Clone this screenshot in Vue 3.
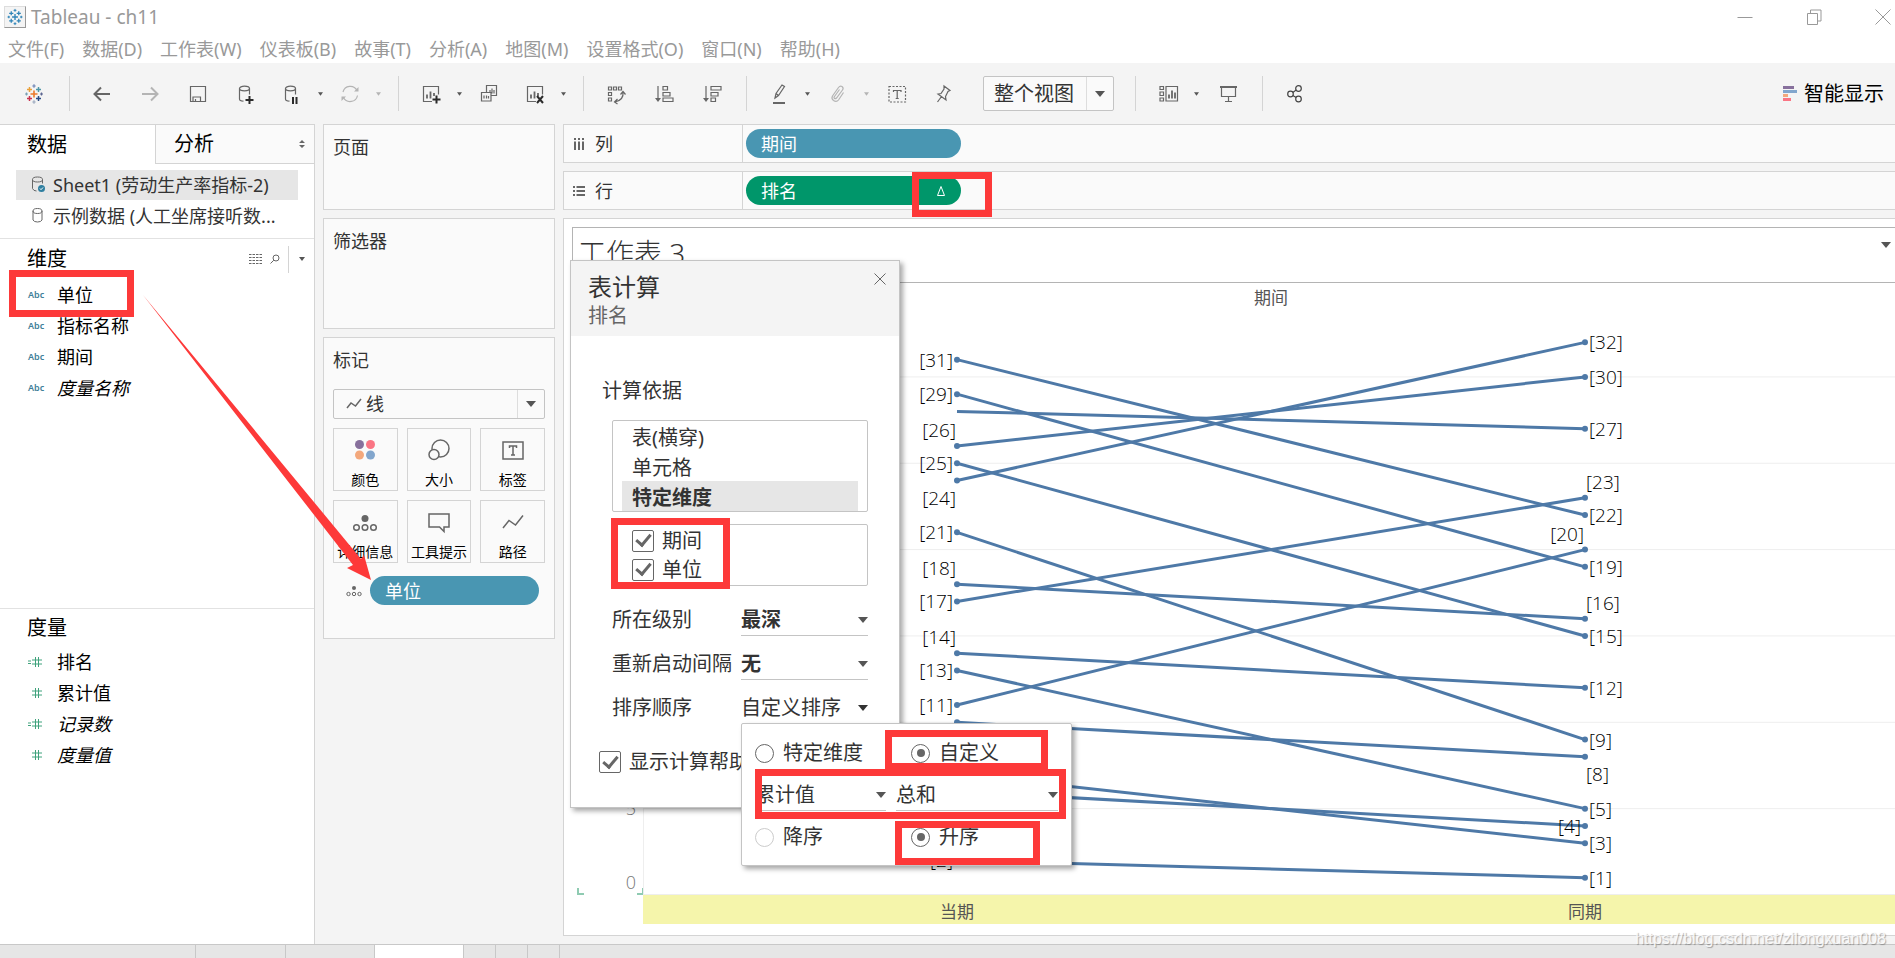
<script setup>
import { ref } from 'vue'

const menus = ['文件(F)', '数据(D)', '工作表(W)', '仪表板(B)', '故事(T)', '分析(A)', '地图(M)', '设置格式(O)', '窗口(N)', '帮助(H)']

const cross = (x, y, r, c, w = 1.5) =>
  `<path d="M${x - r} ${y}h${2 * r}M${x} ${y - r}v${2 * r}" stroke="${c}" stroke-width="${w}"/>`
const logo = (c) =>
  cross(12, 12, 3.5, c[0], 1.6) +
  cross(7.5, 7.5, 2.5, c[1]) + cross(16.5, 7.5, 2.5, c[2]) +
  cross(7.5, 16.5, 2.5, c[3]) + cross(16.5, 16.5, 2.5, c[4]) +
  cross(12, 4, 1.7, c[5], 1.2) + cross(12, 20, 1.7, c[6], 1.2) +
  cross(4.5, 12, 1.5, c[7], 1.2) + cross(19.5, 12, 1.5, c[8], 1.2)

const cyl = '<ellipse cx="10.5" cy="6.5" rx="5" ry="2.3"/><path d="M5.5 6.5v10.5q0 2 4 2.2M15.5 6.5v6"/>'
const sheet = '<path d="M13 19.5h-8.5v-15h15v8"/><path d="M8 16.5v-4M11.5 16.5v-7M15 14v-3" stroke-width="1.8"/>'

const icons = {
  logo: logo(['#eb7a2c', '#e9a13b', '#4f97a8', '#c8334f', '#2a4c86', '#6b83b5', '#9ba9bf', '#7aa0b5', '#5b6591']),
  appLogo: logo(Array(9).fill('#2f84b8')),
  back: '<path d="M20 12H5M11 5.500l-6.500 6.500 6.500 6.500" stroke-width="2"/>',
  forward: '<path d="M4 12h15M13 5.500l6.500 6.500-6.500 6.500" stroke="#b4b4b4" stroke-width="2"/>',
  save: '<path d="M4.500 4.500h15v15h-15z"/><path d="M7 19.500v-4.500h7.500v4.500M9.500 17v2.500" />',
  addData: cyl + '<path d="M11.500 18h8M15.500 14v8" stroke="#2b2b2b" stroke-width="2"/>',
  pause: cyl + '<path d="M13 15v7M16.500 15v7" stroke="#2b2b2b" stroke-width="2"/>',
  refresh: '<g stroke="#b4b4b4"><path d="M5 10a7.500 7.500 0 0 1 14-1.500M19.500 13.500a7.500 7.500 0 0 1-14 2"/><path d="M20.500 5v4.500h-4.500zM3.500 19v-4.500h4.500z" fill="#b4b4b4" stroke="none"/></g>',
  newSheet: sheet + '<path d="M13.500 17.500h8M17.500 13.500v8" stroke="#2b2b2b" stroke-width="2"/>',
  duplicate: '<path d="M9.500 10v-6.500h10v10h-5.500M4.500 10.500h9.500v8.500h-9.500zM13 8v3M15 6.500v5M17 8v3.500M7 13.500v3M9.500 13.500v3M11.500 14v2.500"/>',
  clear: sheet + '<path d="M14 14l6 7M20 14l-6 7" stroke="#2b2b2b" stroke-width="2"/>',
  swap: '<path d="M4.500 5h3v3h-3zM9.500 5h3v3h-3zM14.500 5h3v3h-3zM4.500 10.500h3v3h-3zM4.500 16h3v3h-3z"/><path d="M19 10q1 8-8 10M16.500 12.500l2.500-3 2.500 3M13.500 17l-3 3 3 2"/>',
  sortAsc: '<path d="M6 4v14M11 4.500h4.500v3.500h-4.500zM11 10.500h7v3.500h-7zM11 16h10v3.500h-10z"/><path d="M3 16h6l-3 4z" fill="#666" stroke="none"/>',
  sortDesc: '<path d="M6 4v14M11 4.500h10v3.500h-10zM11 10.500h7v3.500h-7zM11 16h4.500v3.500h-4.500z"/><path d="M3 16h6l-3 4z" fill="#666" stroke="none"/>',
  pen: '<path d="M8 16l1-4.500 6-8.500 2.500 1.500-6 9zM9 11.500l2.500 2"/><path d="M6 21h12" stroke-width="2"/>',
  clip: '<path d="M17.500 10.500l-5 7.500q-2 2.500-5 .5-2.500-2-1-4.500l6-8.500q1.500-2 3.500-1 2 1.500.5 3.500l-6 8q-1 1-2 .5-1-.800 0-2l5-7" stroke="#b4b4b4"/>',
  text: '<path d="M4 4.500h16.500v15.500h-16.500z" stroke-dasharray="2 1.500"/><path d="M8.500 10v-1.500h7.500v1.500M12.200 8.500v8M10.700 16.500h3"/>',
  pin: '<path d="M13 4l6 4.500-2 1-2.500 5 .5 3.500-8-6 3-.5 3-4.500zM10.500 14.500l-4 5.500"/>',
  cards: '<path d="M4 4.500h3.500v3h-3.500zM4 10h3.500v3.500h-3.500zM4 16h3.500v3h-3.500zM10 4.500h11.500v14.500h-11.500z"/><path d="M13 16.500v-4M16 16.500v-8M19 16.500v-6" stroke-width="1.800"/>',
  present: '<path d="M4 5h17" stroke-width="2"/><path d="M5.500 5v9.500h14v-9.500M12.500 14.500v5M9 19.500h7"/>',
  share: '<g stroke="#444"><circle cx="7.500" cy="12" r="2.800"/><circle cx="15.500" cy="6.500" r="2.800"/><circle cx="15.500" cy="17" r="2.800"/><path d="M9.800 10.400l3.400-2.400M9.800 13.500l3.400 2"/></g>',
}

const groups = [
  { cls: 'first', parts: [{ gap: 24, items: [['logo', '开始页面']] }] },
  {
    parts: [
      { gap: 24, items: [['back', '撤消'], ['forward', '重做'], ['save', '保存'], ['addData', '新建数据源']] },
      { gap: 12, items: [['pause', '暂停自动更新', 'dark'], ['refresh', '运行更新', 'light']] },
    ],
  },
  {
    parts: [
      { gap: 12, items: [['newSheet', '新建工作表', 'dark'], ['duplicate', '复制']] },
      { gap: 24, items: [['clear', '清除工作表', 'dark']] },
    ],
  },
  { cls: 'wide', parts: [{ gap: 24, items: [['swap', '交换行和列'], ['sortAsc', '升序排序'], ['sortDesc', '降序排序']] }] },
  {
    cls: 'fit',
    parts: [
      { gap: 13, items: [['pen', '突出显示', 'dark'], ['clip', '组成员', 'light'], ['text', '显示标记标签']] },
      { gap: 24, items: [['pin', '固定轴']] },
    ],
    select: true,
  },
  { cls: 'wide', parts: [{ gap: 14, items: [['cards', '显示/隐藏卡', 'dark'], ['present', '演示模式']] }] },
  { cls: 'last', parts: [{ gap: 24, items: [['share', '共享']] }] },
]

const dimensions = [{ n: '单位' }, { n: '指标名称' }, { n: '期间' }, { n: '度量名称', i: true }]
const measures = [{ n: '排名', c: true }, { n: '累计值' }, { n: '记录数', c: true, i: true }, { n: '度量值', i: true }]

const marks = [
  { n: '颜色', svg: '<g stroke="none"><circle cx="9.500" cy="7.500" r="4.500" fill="#87709c"/><circle cx="20.500" cy="7.500" r="4.500" fill="#fa7584"/><circle cx="9.500" cy="18" r="4.500" fill="#f3a87c"/><circle cx="20.500" cy="18" r="4.500" fill="#82a6cd"/></g>' },
  { n: '大小', svg: '<circle cx="16.500" cy="11.500" r="8.500"/><circle cx="10" cy="17.500" r="5" fill="#fafafa"/>' },
  { n: '标签', svg: '<path d="M5 5h20v17h-20z"/><path d="M11.500 11v-2h7v2M15 9v9M13 18h4" stroke-width="1.500"/>' },
  { n: '详细信息', svg: '<circle cx="15" cy="9.500" r="3.500" fill="#666" stroke="none"/><circle cx="6.500" cy="18.500" r="2.800"/><circle cx="15" cy="18.500" r="2.800"/><circle cx="23.500" cy="18.500" r="2.800"/>' },
  { n: '工具提示', svg: '<path d="M5 5h20v13h-5v4.500l-4.500-4.500h-10.500z"/>' },
  { n: '路径', svg: '<path d="M5 19l6-7.500 6.500 4.500 7.500-9.500"/>' },
]

const unit = 17.27
const plotH = 582
const yOf = (r) => plotH - r * unit
const grid = [5, 10, 15, 20, 25, 30]
const series = [[31, 22], [29, 19], [28, 27], [26, 30], [25, 15], [24, 32], [21, 9], [18, 16], [17, 23], [14, 12], [13, 5], [11, 20], [10, 8], [7, 3], [6, 4], [2, 1]]
const place = {
  side: { dx: 4, dy: 7 },
  above: { dx: 1, dy: -9 },
  below: { dx: 1, dy: 24 },
}
const leftLabels = [[31, 'side'], [29, 'side'], [26, 'above'], [25, 'side'], [24, 'below'], [21, 'side'], [18, 'above'], [17, 'side'], [14, 'above'], [13, 'side'], [11, 'side'], [2, 'side']]
const rightLabels = [[32, 'side'], [30, 'side'], [27, 'side'], [23, 'above'], [22, 'side'], [19, 'side'], [16, 'above'], [15, 'side'], [12, 'side'], [9, 'side'], [8, 'below'], [5, 'side'], [3, 'side'], [1, 'side']]
const innerLabels = [[20, 'above'], [4, 'side']]

const scopes = ['表(横穿)', '单元格', '特定维度']
const scope = ref('特定维度')
const usePeriod = ref(true)
const useUnit = ref(true)
const assist = ref(true)
const sortMode = ref('custom')
const direction = ref('asc')

const boxes = ['hl-field', 'hl-delta', 'hl-checks', 'hl-custom', 'hl-field-agg', 'hl-asc']
</script>

<template>
  <div class="app">
    <header class="titlebar">
      <svg class="appicon" viewBox="0 0 24 24" v-html="icons.appLogo"></svg>
      <h1>Tableau - ch11</h1>
      <div class="winbtns">
        <button aria-label="最小化"><svg viewBox="0 0 16 16"><path d="M0.500 8.500h15" /></svg></button>
        <button aria-label="还原"><svg viewBox="0 0 16 16"><path d="M1.500 4.500h10v11h-10zM4.500 4.500v-3.500h10.500v11h-3.500" /></svg></button>
        <button aria-label="关闭"><svg viewBox="0 0 16 16"><path d="M0.500 0.500l15 15M15.500 0.500l-15 15" /></svg></button>
      </div>
    </header>

    <nav class="menubar">
      <button v-for="m in menus" :key="m">{{ m }}</button>
    </nav>

    <div class="toolbar">
      <div v-for="(g, gi) in groups" :key="gi" class="group" :class="g.cls">
        <div v-for="(p, pi) in g.parts" :key="pi" class="part" :class="'gap' + p.gap">
          <div v-for="it in p.items" :key="it[0]" class="tool">
            <button class="iconbtn" :aria-label="it[1]"><svg viewBox="0 0 24 24" v-html="icons[it[0]]"></svg></button>
            <button v-if="it[2]" class="drop" :class="it[2]" :aria-label="it[1] + '选项'">
              <svg viewBox="0 0 6 4"><path d="M0 0h6l-3 4z" /></svg>
            </button>
          </div>
        </div>
        <div v-if="g.select" class="combo fit-combo">
          <select aria-label="适合"><option>整个视图</option></select>
          <svg class="tri" viewBox="0 0 10 6"><path d="M0 0h10l-5 6z" /></svg>
        </div>
      </div>
      <button class="showme">
        <svg viewBox="0 0 14 16"><path fill="#87709c" d="M0 0h11v3h-11z" /><path fill="#82a6cd" d="M0 4h14v3h-14z" /><path fill="#f3a87c" d="M0 8h5v3h-5z" /><path fill="#fa7584" d="M0 12h8v3h-8z" /></svg>
        智能显示
      </button>
    </div>

    <main class="work">
      <aside class="datapane">
        <div class="tabs">
          <button class="tab on">数据</button>
          <button class="tab">分析
            <svg viewBox="0 0 6 8"><path d="M0 3l3-3 3 3zM0 5h6l-3 3z" /></svg>
          </button>
        </div>
        <ul class="sources">
          <li class="on">
            <svg viewBox="0 0 16 18"><ellipse cx="6.500" cy="3.500" rx="5" ry="2.500" /><path d="M1.500 3.500v9q1 2.500 4 2.500M11.500 3.500v4" /><circle cx="10.500" cy="12.500" r="3.500" fill="#2f7fa0" stroke="none" /><path d="M9 12.500l1 1.200 2-2.200" stroke="#fff" /></svg>
            <span>Sheet1 (劳动生产率指标-2)</span>
          </li>
          <li>
            <svg viewBox="0 0 16 18"><ellipse cx="6.500" cy="4" rx="4.500" ry="2.500" /><path d="M2 4v9q1 2 4.500 2t4.500-2v-9" /></svg>
            <span>示例数据 (人工坐席接听数...</span>
          </li>
        </ul>
        <section class="dims">
          <div class="sechead">
            <h2>维度</h2>
            <button class="view" aria-label="查看数据"><svg viewBox="0 0 13 10"><path d="M0 0.500h13M0 3.500h13M0 6.500h13M0 9.500h13" stroke-dasharray="2.500 1" /></svg></button>
            <button class="find" aria-label="查找字段"><svg viewBox="0 0 10 10"><circle cx="6" cy="4" r="3" /><path d="M3.800 6.200l-3.300 3.300" /></svg></button>
            <button class="more" aria-label="维度菜单"><svg viewBox="0 0 6 4"><path d="M0 0h6l-3 4z" /></svg></button>
          </div>
          <ul class="fields">
            <li v-for="d in dimensions" :key="d.n"><span class="abc">Abc</span><span :class="{ it: d.i }">{{ d.n }}</span></li>
          </ul>
        </section>
        <section class="meas">
          <div class="sechead"><h2>度量</h2></div>
          <ul class="fields">
            <li v-for="m in measures" :key="m.n">
              <svg class="hash" viewBox="0 0 14 10"><path d="M4 3h10M4 7h10M7.500 0v10M10.500 0v10" /><path v-if="m.c" d="M0 4h3M0 6.500h3" /></svg>
              <span :class="{ it: m.i }">{{ m.n }}</span>
            </li>
          </ul>
        </section>
      </aside>

      <div class="cards">
        <section class="card pages"><h3>页面</h3></section>
        <section class="card filters"><h3>筛选器</h3></section>
        <section class="card marks">
          <h3>标记</h3>
          <div class="combo mark-combo">
            <svg class="lineicon" viewBox="0 0 16 12"><path d="M1 10l4-5 4.500 3 5.500-7" /></svg>
            <select aria-label="标记类型"><option>线</option></select>
            <svg class="tri" viewBox="0 0 10 6"><path d="M0 0h10l-5 6z" /></svg>
          </div>
          <div class="markgrid">
            <button v-for="m in marks" :key="m.n"><svg viewBox="0 0 30 26" v-html="m.svg"></svg>{{ m.n }}</button>
          </div>
          <div class="detail">
            <svg viewBox="0 0 16 12"><circle cx="8" cy="3" r="2" fill="#666" stroke="none" /><circle cx="2.500" cy="9" r="1.700" /><circle cx="8" cy="9" r="1.700" /><circle cx="13.500" cy="9" r="1.700" /></svg>
            <button class="pill blue">单位</button>
          </div>
        </section>
      </div>

      <div class="canvas">
        <div class="shelf">
          <div class="shelfname">
            <svg viewBox="0 0 12 12"><path d="M2 0v2M6 0v2M10 0v2M2 3.500v8.500M6 3.500v8.500M10 3.500v8.500" /></svg>列
          </div>
          <button class="pill blue">期间</button>
        </div>
        <div class="shelf">
          <div class="shelfname">
            <svg viewBox="0 0 12 12"><path d="M0 2h2M0 6h2M0 10h2M3.500 2h8.500M3.500 6h8.500M3.500 10h8.500" /></svg>行
          </div>
          <button class="pill green">排名
            <svg viewBox="0 0 10 12"><path d="M5 1.500l3.500 9h-7z" /></svg>
          </button>
        </div>
        <section class="viz">
          <div class="viztitle">
            <h2>工作表 3</h2>
            <button aria-label="工作表菜单"><svg viewBox="0 0 10 6"><path d="M0 0h10l-5 6z" /></svg></button>
          </div>
          <div class="vizbody">
            <svg class="axis" role="img" aria-label="排名轴">
              <text x="64" :y="yOf(5) + 6">5</text>
              <text x="64" :y="yOf(0) - 6">0</text>
              <path d="M6 575v6h6M65 581h6v-6" />
            </svg>
            <div class="plotcol">
              <div class="colhead">期间</div>
              <svg class="plot" role="img" aria-label="排名变化">
                <line v-for="g in grid" :key="g" class="grid" x1="0" x2="100%" :y1="yOf(g)" :y2="yOf(g)" />
                <line class="grid" x1="0.500" x2="0.500" y1="0" y2="582" />
                <line class="grid" x1="0" x2="100%" y1="581.500" y2="581.500" />
                <g v-for="s in series" :key="s[0]">
                  <line class="rank" x1="25%" x2="75%" :y1="yOf(s[0])" :y2="yOf(s[1])" />
                  <circle v-if="s[0] !== 28" cx="25%" :cy="yOf(s[0])" r="3" />
                  <circle cx="75%" :cy="yOf(s[1])" r="3" />
                </g>
                <text v-for="l in leftLabels" :key="'l' + l[0]" class="end" x="25%" :dx="-place[l[1]].dx" :y="yOf(l[0]) + place[l[1]].dy">[{{ l[0] }}]</text>
                <text v-for="l in rightLabels" :key="'r' + l[0]" x="75%" :dx="place[l[1]].dx" :y="yOf(l[0]) + place[l[1]].dy">[{{ l[0] }}]</text>
                <text v-for="l in innerLabels" :key="'i' + l[0]" class="end" x="75%" :dx="-place[l[1]].dx" :y="yOf(l[0]) + place[l[1]].dy">[{{ l[0] }}]</text>
              </svg>
              <div class="band"><span>当期</span><span>同期</span></div>
            </div>
          </div>
        </section>
      </div>
    </main>

    <footer class="sheetbar"><i></i><i></i><i></i><i class="on"></i><i></i><i></i><i></i></footer>

    <section class="dialog" role="dialog" aria-label="表计算">
      <div class="dhead">
        <div><h2>表计算</h2><p>排名</p></div>
        <button aria-label="关闭对话框"><svg viewBox="0 0 12 12"><path d="M0.500 0.500l11 11M11.500 0.500l-11 11" /></svg></button>
      </div>
      <div class="dbody">
        <h3>计算依据</h3>
        <div class="scopes">
          <button v-for="s in scopes" :key="s" :class="{ on: s === scope }" @click="scope = s">{{ s }}</button>
        </div>
        <div class="checks">
          <label><input v-model="usePeriod" type="checkbox" />期间</label>
          <label><input v-model="useUnit" type="checkbox" />单位</label>
        </div>
        <div class="opt"><label for="lvl">所在级别</label>
          <div class="under"><select id="lvl" class="b"><option>最深</option></select><svg viewBox="0 0 10 6"><path d="M0 0h10l-5 6z" /></svg></div></div>
        <div class="opt"><label for="rst">重新启动间隔</label>
          <div class="under"><select id="rst" class="b"><option>无</option></select><svg viewBox="0 0 10 6"><path d="M0 0h10l-5 6z" /></svg></div></div>
        <div class="opt"><label for="ord">排序顺序</label>
          <div class="under open"><select id="ord"><option>自定义排序</option></select><svg viewBox="0 0 10 6"><path d="M0 0h10l-5 6z" /></svg></div></div>
        <label class="assist"><input v-model="assist" type="checkbox" />显示计算帮助</label>
      </div>
    </section>

    <section class="popup">
      <div class="two">
        <label><input v-model="sortMode" type="radio" name="mode" value="dim" />特定维度</label>
        <label><input v-model="sortMode" type="radio" name="mode" value="custom" />自定义</label>
      </div>
      <div class="selrow">
        <div class="under"><select aria-label="字段"><option>累计值</option></select><svg viewBox="0 0 10 6"><path d="M0 0h10l-5 6z" /></svg></div>
        <div class="under"><select aria-label="聚合"><option>总和</option></select><svg viewBox="0 0 10 6"><path d="M0 0h10l-5 6z" /></svg></div>
      </div>
      <div class="two">
        <label class="faint"><input v-model="direction" type="radio" name="dir" value="desc" />降序</label>
        <label><input v-model="direction" type="radio" name="dir" value="asc" />升序</label>
      </div>
    </section>

    <div v-for="b in boxes" :key="b" class="hl" :class="b"></div>
    <svg class="arrow" viewBox="0 0 230 290"><path d="M0 1L218 265 221 261 228 286 204 274 210 271z" /></svg>
    <div class="watermark">https://blog.csdn.net/zilongxuan008</div>
  </div>
</template>

<style>
html, body { background: #f4f4f4; overflow-x: hidden; }
</style>

<style scoped>
.app {
  position: relative;
  display: flex;
  flex-direction: column;
  min-height: 100vh;
  overflow: hidden;
  font-family: "Noto Sans", "Noto Sans CJK SC", sans-serif;
  font-size: 18px;
  line-height: 30px;
  color: #333;
}
.app *, .app :deep(*) { box-sizing: border-box; }
h1, h2, h3, p, ul { margin: 0; padding: 0; font-weight: 400; }
ul { list-style: none; }
button, select {
  font: inherit;
  color: inherit;
  background: none;
  border: 0;
  padding: 0;
  margin: 0;
  appearance: none;
}
input { margin: 0; }
svg { display: block; fill: none; stroke: #666; flex: none; }

.titlebar { display: flex; align-items: center; height: 34px; background: #fff; color: #999; }
.appicon { width: 22px; height: 22px; margin-left: 4px; background: #f4f4f4; border: 1px solid #ddd; border-right-color: #999; border-bottom-color: #999; }
h1 { margin-left: 5px; font-size: 19px; }
.winbtns { margin-left: auto; margin-right: 4px; display: flex; gap: 53px; }
.winbtns svg { width: 16px; height: 16px; stroke: #999; }

.menubar { display: flex; gap: 18px; height: 29px; padding-left: 8px; background: #fff; color: #999; line-height: 30px; }

.toolbar { display: flex; align-items: center; height: 61px; background: #f4f4f4; }
.group { display: flex; align-items: center; gap: 22px; height: 35px; padding: 0 14px 0 20px; border-right: 1px solid #d4d4d4; }
.group.first { padding: 0 23px 0 22px; }
.group.wide { padding-right: 22px; }
.group.fit { padding-right: 21px; }
.group.last { border: 0; }
.part { display: flex; }
.gap24 { gap: 24px; }
.gap12 { gap: 12px; }
.gap13 { gap: 13px; }
.gap14 { gap: 14px; }
.tool { display: flex; align-items: center; gap: 10px; }
.iconbtn svg { width: 24px; height: 24px; stroke-width: 1.2; }
.drop { width: 12px; height: 24px; display: flex; align-items: center; justify-content: center; }
.drop svg { width: 5px; height: 4px; stroke: none; fill: #555; }
.drop.light svg { fill: #b4b4b4; }
.combo { display: flex; align-items: center; position: relative; border: 1px solid #c4c4c4; border-radius: 2px; background: #fafafa; }
.combo select { flex: 1; min-width: 0; height: 100%; }
.combo .tri { position: absolute; right: 8px; width: 10px; height: 6px; pointer-events: none; }
.tri, .under svg, .viztitle svg { stroke: none; fill: #555; }
.combo::after { content: ""; position: absolute; right: 26px; top: 0; bottom: 0; border-left: 1px solid #ddd; }
.fit-combo { width: 131px; height: 35px; margin-left: 6px; font-size: 20px; }
.fit-combo select { padding: 1px 0 0 10px; }
.showme { margin-left: auto; margin-right: 11px; display: flex; align-items: center; gap: 7px; font-size: 20px; color: #000; }
.showme svg { width: 14px; height: 16px; stroke: none; }

.work { flex: 1; display: flex; gap: 8px; }

.datapane { width: 315px; flex: none; background: #fff; border-top: 1px solid #d4d4d4; border-right: 1px solid #d4d4d4; color: #000; }
.tabs { display: flex; height: 39px; font-size: 20px; line-height: 40px; }
.tab { width: 155px; text-align: left; padding-left: 27px; }
.tab:not(.on) { flex: 1; display: flex; align-items: center; justify-content: space-between; padding: 0 9px 0 18px; background: #fafafa; border-left: 1px solid #d4d4d4; border-bottom: 1px solid #d4d4d4; }
.tab svg { width: 6px; height: 8px; stroke: none; fill: #666; }
.sources { padding: 6px 16px 7px; color: #333; }
.sources li { display: flex; align-items: center; gap: 6px; height: 30px; padding-left: 15px; white-space: nowrap; }
.sources li.on { background: #e6e6e6; }
.sources svg { width: 16px; height: 18px; }
.sources li + li { margin-top: 1px; }
.dims { height: 370px; border-top: 1px solid #e2e2e2; }
.meas { border-top: 1px solid #e2e2e2; }
.sechead { display: flex; align-items: center; height: 40px; padding: 0 9px 0 27px; }
.meas .sechead { height: 37px; }
.sechead h2 { flex: 1; font-size: 20px; line-height: 32px; }
.view svg { width: 13px; height: 10px; stroke-width: 1; }
.find { margin-left: 8px; }
.find svg { width: 10px; height: 10px; }
.more { margin-left: 8px; height: 27px; padding-left: 10px; border-left: 1px solid #d4d4d4; }
.more svg { width: 6px; height: 4px; stroke: none; fill: #555; }
.fields li { display: flex; align-items: center; height: 31px; padding-left: 28px; }
.abc { width: 29px; font: 600 9px/12px "Noto Sans", sans-serif; color: #3f8099; }
.hash { width: 14px; height: 10px; margin-right: 15px; stroke: #3fa27c; stroke-width: 1; }
.it { font-style: italic; }

.cards { width: 232px; flex: none; display: flex; flex-direction: column; gap: 8px; }
.card { background: #fafafa; border: 1px solid #d4d4d4; padding: 7px 9px; }
h3 { font-size: 18px; line-height: 30px; }
.pages { height: 86px; }
.filters { height: 111px; }
.marks { height: 302px; }
.mark-combo { height: 30px; margin-top: 14px; }
.lineicon { width: 16px; height: 12px; margin-left: 12px; stroke-width: 1.5; }
.mark-combo select { padding-left: 4px; line-height: 28px; }
.markgrid { display: grid; grid-template-columns: repeat(3, 1fr); gap: 9px; margin-top: 9px; }
.markgrid button { display: flex; flex-direction: column; align-items: center; height: 63px; padding-top: 8px; gap: 7px; border: 1px solid #d4d4d4; font-size: 14px; line-height: 20px; color: #000; white-space: nowrap; }
.markgrid svg { width: 30px; height: 26px; stroke-width: 1.5; }
.detail { display: flex; align-items: center; margin: 13px 6px 0 13px; gap: 8px; }
.detail svg { width: 16px; height: 12px; stroke-width: 1; }
.pill { height: 29px; border-radius: 15px; padding-left: 15px; text-align: left; line-height: 28px; color: #fff; }
.detail .pill { flex: 1; }
.blue { background: #4996b2; }
.green { background: #00966a; display: flex; align-items: center; justify-content: space-between; padding-right: 15px; }
.green svg { width: 10px; height: 12px; stroke: #fff; }

.canvas { flex: 1; min-width: 0; display: flex; flex-direction: column; gap: 8px; }
.shelf { display: flex; align-items: center; height: 39px; background: #fafafa; border: 1px solid #d4d4d4; border-right: 0; }
.shelfname { width: 179px; height: 37px; display: flex; align-items: center; gap: 10px; padding-left: 9px; border-right: 1px solid #d4d4d4; }
.shelfname svg { width: 12px; height: 12px; stroke-width: 2; }
.shelf .pill { width: 215px; margin-left: 3px; }
.viz { background: #fff; border: 1px solid #d4d4d4; border-right: 0; padding: 8px 0 11px 8px; margin-bottom: 8px; }
.viztitle { display: flex; justify-content: space-between; align-items: flex-start; height: 56px; border: 1px solid #b4b4b4; border-right: 0; padding: 6px 4px 0 5px; }
.viztitle h2 { font-size: 28px; line-height: 38px; font-weight: 300; }
.viztitle button { padding-top: 8px; }
.viztitle svg { width: 10px; height: 6px; }
.vizbody { display: flex; overflow: hidden; }
.axis { width: 71px; height: 582px; margin-top: 30px; }
.axis text { fill: #787878; stroke: none; text-anchor: end; font: 300 18px "Open Sans", sans-serif; }
.axis path { stroke: #8fcbb2; stroke-width: 2; }
.plotcol { flex: 1; margin-right: -4px; }
.colhead { height: 30px; text-align: center; color: #555; font-size: 17px; line-height: 30px; }
.plot { width: 100%; height: 582px; }
.grid { stroke: #eee; }
.rank { stroke: #4e79a7; stroke-width: 3; }
.plot circle { fill: #4e79a7; stroke: none; }
.plot text { font: 300 19px "Open Sans", "Noto Sans", sans-serif; fill: #000; stroke: none; }
.plot .end { text-anchor: end; }
.band { display: flex; height: 29px; background: #f5f5ab; color: #555; font-size: 17px; line-height: 34px; }
.band span { flex: 1; text-align: center; }

.sheetbar { display: flex; height: 14px; background: #e6e6e6; border-top: 1px solid #c8c8c8; }
.sheetbar i { width: 32px; border-right: 1px solid #c8c8c8; }
.sheetbar i:first-child { width: 196px; }
.sheetbar i:nth-child(2) { width: 90px; }
.sheetbar i:nth-child(3) { width: 89px; }
.sheetbar i.on { width: 89px; background: #fff; }

.dialog { position: absolute; left: 570px; top: 260px; width: 330px; height: 548px; background: #fff; border: 1px solid #c4c4c4; box-shadow: 3px 3px 5px rgba(0, 0, 0, 0.35); font-size: 20px; }
.dhead { display: flex; justify-content: space-between; align-items: flex-start; height: 75px; padding: 11px 13px 0 17px; background: #f4f4f4; }
.dhead h2 { font-size: 24px; line-height: 30px; }
.dhead p { line-height: 28px; color: #666; }
.dhead button { padding-top: 1px; }
.dhead svg { width: 12px; height: 12px; }
.dbody { padding: 40px 31px 0 41px; }
.dbody h3 { margin-left: -10px; font-size: 20px; }
.scopes { display: flex; flex-direction: column; height: 92px; margin-top: 14px; padding: 0 9px; border: 1px solid #c4c4c4; border-radius: 2px; }
.scopes button { height: 30px; padding: 2px 0 0 10px; text-align: left; }
.scopes .on { background: #e6e6e6; font-weight: 700; }
.checks { height: 62px; margin-top: 12px; padding: 1px 19px; border: 1px solid #c4c4c4; border-radius: 2px; }
.checks label { display: flex; align-items: center; gap: 8px; height: 29px; }
input[type="checkbox"] { appearance: none; width: 22px; height: 22px; border: 1px solid #666; border-radius: 2px; display: grid; place-items: center; background: #fff; }
input[type="checkbox"]:checked::after { content: ""; width: 6px; height: 12px; margin-top: -4px; border: solid #666; border-width: 0 3px 3px 0; transform: rotate(40deg); }
.opt { display: flex; height: 32px; margin-bottom: 12px; align-items: center; white-space: nowrap; }
.checks + .opt { margin-top: 18px; }
.opt label { width: 129px; }
.under { position: relative; flex: 1; display: flex; align-items: center; height: 32px; border-bottom: 1px solid #c4c4c4; }
.under.open { border-color: transparent; }
.under.open svg { fill: #333; }
.under select { flex: 1; min-width: 0; }
.under svg { position: absolute; right: 0; width: 10px; height: 6px; pointer-events: none; }
.b { font-weight: 700; }
.assist { display: flex; align-items: center; gap: 8px; margin: 23px 0 0 -13px; white-space: nowrap; }

.popup { position: absolute; left: 741px; top: 723px; width: 331px; height: 143px; padding: 14px 13px 0; background: #fff; border: 1px solid #c4c4c4; border-radius: 2px; box-shadow: 3px 3px 5px rgba(0, 0, 0, 0.35); font-size: 20px; }
.two { display: grid; grid-template-columns: 156px 1fr; }
.two label { display: flex; align-items: center; gap: 9px; height: 30px; }
input[type="radio"] { appearance: none; width: 19px; height: 19px; border: 1px solid #666; border-radius: 50%; background: #fff; display: grid; place-items: center; }
input[type="radio"]:checked::after { content: ""; width: 8px; height: 8px; border-radius: 50%; background: #666; }
.faint input { border-color: #ccc; }
.selrow { display: grid; grid-template-columns: 131px 162px; gap: 10px; margin: 11px 0; }

.hl { position: absolute; border: 7px solid #fd3939; pointer-events: none; }
.hl-field { left: 9px; top: 270px; width: 125px; height: 47px; }
.hl-delta { left: 912px; top: 172px; width: 80px; height: 45px; }
.hl-checks { left: 611px; top: 518px; width: 119px; height: 71px; }
.hl-custom { left: 885px; top: 730px; width: 163px; height: 40px; }
.hl-field-agg { left: 755px; top: 769px; width: 311px; height: 50px; }
.hl-asc { left: 895px; top: 821px; width: 145px; height: 44px; }
.arrow { position: absolute; left: 143px; top: 294px; width: 230px; height: 290px; pointer-events: none; }
.arrow path { fill: #fd3939; stroke: none; }
.watermark { position: absolute; right: 9px; bottom: 7px; font: 16px/24px "Liberation Sans", sans-serif; color: rgba(255, 255, 255, 0.85); text-shadow: 1px 1px 1px rgba(0, 0, 0, 0.3); }
</style>
